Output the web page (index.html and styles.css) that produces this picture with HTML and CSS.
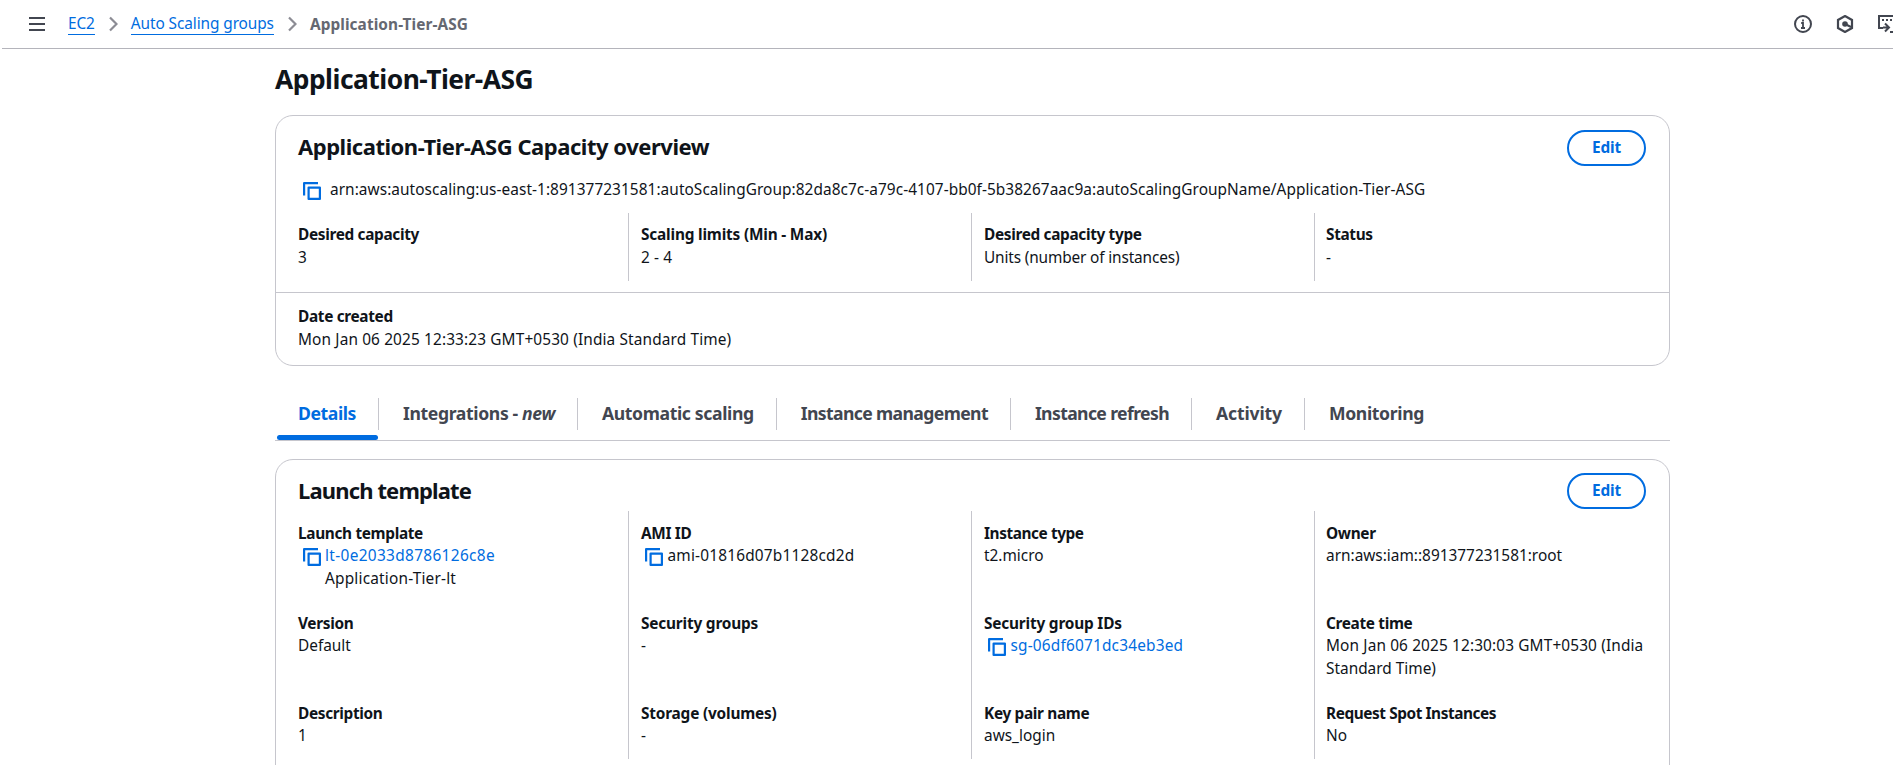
FILE: index.html
```html
<!DOCTYPE html>
<html lang="en">
<head>
<meta charset="utf-8">
<title>Application-Tier-ASG</title>
<link rel="stylesheet" href="styles.css">
</head>
<body>
<svg class="defs" aria-hidden="true">
  <symbol id="copy" viewBox="0 0 18 18"><path d="M1.1 13.5V1.1H15M5.6 5.6H16.9V16.9H5.6Z" fill="none" stroke="currentColor" stroke-width="2.2" stroke-linejoin="round"/></symbol>
  <symbol id="chev" viewBox="0 0 9 16"><path d="M1 1.5L7.5 8L1 14.5" fill="none" stroke="currentColor" stroke-width="2.2"/></symbol>
</svg>
<header class="topbar">
  <svg class="menu" viewBox="0 0 16 14"><path d="M0 1H16M0 7H16M0 13H16" stroke="currentColor" stroke-width="2"/></svg>
  <nav class="crumbs">
    <a class="crumb" href="#">EC2</a>
    <svg class="chev"><use href="#chev"/></svg>
    <a class="crumb" href="#">Auto Scaling groups</a>
    <svg class="chev"><use href="#chev"/></svg>
    <span class="current">Application-Tier-ASG</span>
  </nav>
  <div class="tools">
    <svg class="tool" viewBox="0 0 18 18"><circle cx="9" cy="9" r="8" fill="none" stroke="currentColor" stroke-width="2"/><path d="M9 4.5V6.5M7.2 8H9V13M7 13H11" fill="none" stroke="currentColor" stroke-width="1.8"/></svg>
    <svg class="tool" viewBox="0 0 18 18"><path d="M9 1L16 5V13L9 17L2 13V5Z" fill="none" stroke="currentColor" stroke-width="2.2"/><circle cx="9" cy="9" r="2.8" fill="currentColor"/><path d="M9 9L15 12" stroke="currentColor" stroke-width="2"/></svg>
    <svg class="tool" viewBox="0 0 18 18"><path d="M5 13H1V1H18" fill="none" stroke="currentColor" stroke-width="2"/><path d="M4 5H6M8 5H10M12 5H14M16 5H18" stroke="currentColor" stroke-width="2"/><path d="M5 12.5H10M7 8.5L11 12.5L7 16.5M12 17H18" fill="none" stroke="currentColor" stroke-width="2"/></svg>
  </div>
</header>
<main class="page">
  <h1 class="title">Application-Tier-ASG</h1>
  <section class="card overview">
    <div class="card-head"><h2>Application-Tier-ASG Capacity overview</h2><button class="edit">Edit</button></div>
    <div class="arn"><svg class="copy"><use href="#copy"/></svg><span>arn:aws:autoscaling:us-east-1:891377231581:autoScalingGroup:82da8c7c-a79c-4107-bb0f-5b38267aac9a:autoScalingGroupName/Application-Tier-ASG</span></div>
    <div class="columns">
      <div class="column"><dl><dt>Desired capacity</dt><dd>3</dd></dl></div>
      <div class="column"><dl><dt class="loose">Scaling limits (Min - Max)</dt><dd class="date">2 - 4</dd></dl></div>
      <div class="column"><dl><dt>Desired capacity type</dt><dd class="prose">Units (number of instances)</dd></dl></div>
      <div class="column"><dl><dt>Status</dt><dd>-</dd></dl></div>
    </div>
    <dl class="created"><dt>Date created</dt><dd class="date">Mon Jan 06 2025 12:33:23 GMT+0530 (India Standard Time)</dd></dl>
  </section>
  <nav class="tabs">
    <a class="tab active" href="#">Details</a>
    <a class="tab" href="#">Integrations - <i>new</i></a>
    <a class="tab" href="#">Automatic scaling</a>
    <a class="tab tight" href="#">Instance management</a>
    <a class="tab tight" href="#">Instance refresh</a>
    <a class="tab loose" href="#">Activity</a>
    <a class="tab" href="#">Monitoring</a>
  </nav>
  <section class="card template">
    <div class="card-head"><h2>Launch template</h2><button class="edit">Edit</button></div>
    <div class="columns">
      <div class="column">
        <dl><dt>Launch template</dt><dd class="with-copy"><svg class="copy"><use href="#copy"/></svg><div><a class="link-id" href="#">lt-0e2033d8786126c8e</a><br><span class="id">Application-Tier-lt</span></div></dd></dl>
        <dl><dt>Version</dt><dd>Default</dd></dl>
        <dl><dt>Description</dt><dd>1</dd></dl>
      </div>
      <div class="column">
        <dl><dt>AMI ID</dt><dd class="with-copy"><svg class="copy"><use href="#copy"/></svg><span class="id">ami-01816d07b1128cd2d</span></dd></dl>
        <dl><dt class="loose">Security groups</dt><dd>-</dd></dl>
        <dl><dt class="loose">Storage (volumes)</dt><dd>-</dd></dl>
      </div>
      <div class="column">
        <dl><dt class="tight">Instance type</dt><dd>t2.micro</dd></dl>
        <dl><dt class="loose">Security group IDs</dt><dd class="with-copy"><svg class="copy"><use href="#copy"/></svg><a class="id" href="#">sg-06df6071dc34eb3ed</a></dd></dl>
        <dl><dt>Key pair name</dt><dd>aws_login</dd></dl>
      </div>
      <div class="column">
        <dl><dt>Owner</dt><dd>arn:aws:iam::891377231581:root</dd></dl>
        <dl><dt>Create time</dt><dd><span class="date">Mon Jan 06 2025 12:30:03 GMT+0530 (India</span><br>Standard Time)</dd></dl>
        <dl><dt class="tight">Request Spot Instances</dt><dd>No</dd></dl>
      </div>
    </div>
  </section>
</main>
</body>
</html>
```
FILE: styles.css
```css
* { box-sizing: border-box; }
body { margin: 0; height: 765px; overflow: hidden; background: #fff; color: #0f141a; font: 15.4px/22px "Noto Sans", "Open Sans", sans-serif; }
a { color: #006ce0; text-decoration: none; }
h1, h2, dl, dd { margin: 0; }
.defs { display: none; }

.topbar { display: flex; align-items: center; height: 49px; margin-left: 2px; padding-left: 27px; border-bottom: 1px solid #b4b4bb; color: #424650; }
.menu { width: 16px; height: 14px; margin-right: 23px; }
.crumbs { display: flex; align-items: center; flex: 1; }
.crumb { border-bottom: 1px solid #006ce0; line-height: 20px; letter-spacing: -.09px; }
.chev { width: 9px; height: 16px; margin: 0 13px 0 14px; color: #8c8c94; }
.current { padding-top: 1px; color: #656871; font-weight: 700; letter-spacing: .08px; }
.tools { display: flex; gap: 24px; margin-right: -3px; }
.tool { width: 18px; height: 18px; }

.page { width: 1395px; margin-left: 275px; }
.title { padding-top: 12px; font-size: 26.4px; line-height: 36px; letter-spacing: -.5px; }
.card { border: 1px solid #c6c6cd; border-radius: 18px; }
.card-head { display: flex; justify-content: space-between; padding: 14px 23px 0 22px; }
h2 { height: 34px; font-size: 22px; line-height: 32px; letter-spacing: -.47px; }
.edit { width: 79px; height: 36px; border: 2px solid #006ce0; border-radius: 18px; background: #fff; color: #006ce0; font: 700 15.4px/22px "Noto Sans", sans-serif; letter-spacing: -.16px; padding: 0; }
.copy { width: 18px; height: 18px; margin-top: 3px; color: #006ce0; flex: none; }
.columns { display: grid; grid-template-columns: 352px 343px 343px 1fr; }
.column { padding: 11px 12px; border-left: 1px solid #c6c6cd; }
.column:first-child { padding-left: 22px; border-left: 0; }
.column:last-child { padding-left: 11px; }
dt { font-weight: 700; letter-spacing: -.34px; }
dt.loose { letter-spacing: -.19px; }
dt.tight { letter-spacing: -.43px; }
.date { letter-spacing: .13px; }
.prose { letter-spacing: -.15px; }
.id { letter-spacing: .19px; }
.link-id { letter-spacing: .34px; }

.overview { height: 251px; margin-top: 18px; }
.arn { display: flex; gap: 9px; margin: 13px 0 0 27px; letter-spacing: .06px; }
.overview .columns { margin-top: 12px; height: 68px; }
.overview dd { padding-top: 1px; }
.created { margin-top: 11px; padding: 13px 22px; border-top: 1px solid #c6c6cd; }

.tabs { display: flex; margin-top: 32px; height: 43px; border-bottom: 1px solid #c6c6cd; }
.tab { height: 32px; padding: 4px 22.2px 0 23.8px; border-right: 1px solid #c6c6cd; color: #424650; font-size: 17.6px; font-weight: 700; letter-spacing: -.36px; }
.tab:last-child { border: 0; }
.tab.tight { letter-spacing: -.62px; }
.tab.loose { letter-spacing: -.14px; }
.tab.active { position: relative; padding-left: 23px; color: #006ce0; letter-spacing: -.42px; }
.tab.active::after { content: ""; position: absolute; left: 2px; right: 0; top: 37px; height: 5px; border-radius: 3px; background: #006ce0; }

.template { height: 340px; margin-top: 18px; }
.template .card-head { height: 51px; padding-top: 13px; }
.template h2 { line-height: 34px; letter-spacing: -.86px; }
.template .column { height: 248px; padding-top: 12px; display: flex; flex-direction: column; gap: 22px; }
.template dl { height: 68px; flex: none; }
.template dd { line-height: 22.6px; }
.with-copy { display: flex; gap: 4.5px; padding-left: 4px; }
.column:first-child .with-copy { padding-left: 5px; gap: 4px; }
```
